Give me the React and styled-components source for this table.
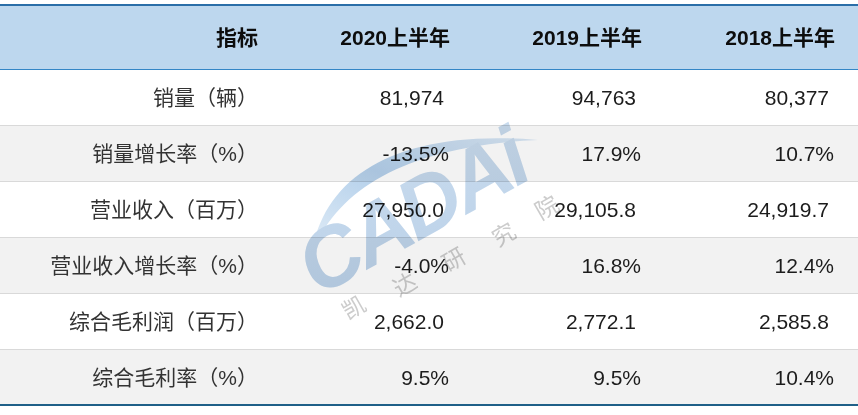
import React from "react";
import styled, { createGlobalStyle } from "styled-components";

const Global = createGlobalStyle`
  html, body { margin: 0; padding: 0; background: #ffffff; }
  body { font-family: "Liberation Sans", Arial, "Noto Sans CJK SC", sans-serif; }
`;

const Page = styled.div`
  position: relative;
  width: 858px;
  padding-top: 4px;
  background: #ffffff;
`;

const Table = styled.div`
  border-top: 2px solid #2a6ea8;
  border-bottom: 2px solid #1f6088;
`;

const Row = styled.div`
  display: grid;
  grid-template-columns: 270px 192px 192px 204px;
  height: ${(p) => p.$h}px;
  background: ${(p) => p.$bg};
  border-bottom: ${(p) => (p.$line ? `1px solid ${p.$line}` : "none")};
  align-items: center;
`;

const Cell = styled.div`
  text-align: right;
  padding-right: ${(p) => p.$pr}px;
  font-size: 21px;
  line-height: 1;
  white-space: nowrap;
  font-family: "Liberation Sans", Arial, "Noto Sans CJK SC", sans-serif;
  color: ${(p) => (p.$head ? "#0d0d0d" : p.$label ? "#333333" : "#1c1c1c")};
  font-weight: ${(p) => (p.$head ? 700 : 400)};
`;

const Watermark = styled.svg`
  position: absolute;
  left: 0;
  top: 0;
  width: 858px;
  height: 415px;
  pointer-events: none;
  mix-blend-mode: multiply;
`;

const headers = ["指标", "2020上半年", "2019上半年", "2018上半年"];
const rows = [
  ["销量（辆）", "81,974", "94,763", "80,377"],
  ["销量增长率（%）", "-13.5%", "17.9%", "10.7%"],
  ["营业收入（百万）", "27,950.0", "29,105.8", "24,919.7"],
  ["营业收入增长率（%）", "-4.0%", "16.8%", "12.4%"],
  ["综合毛利润（百万）", "2,662.0", "2,772.1", "2,585.8"],
  ["综合毛利率（%）", "9.5%", "9.5%", "10.4%"],
];

const basePad = [12, 13, 13, 24];

const cjk = [
  ["凯", 353, 306],
  ["达", 404, 283],
  ["研", 453, 258],
  ["究", 503, 233],
  ["院", 546, 206],
];

export default function App() {
  return (
    <>
      <Global />
      <Page>
        <Table>
          <Row $h={63} $bg="#bdd7ee" $line="#3486c6">
            {headers.map((h, i) => (
              <Cell key={i} $head $pr={i === 0 ? 12 : basePad[i] - 1}>
                {h}
              </Cell>
            ))}
          </Row>
          {rows.map((r, ri) => (
            <Row
              key={ri}
              $h={ri === rows.length - 1 ? 54 : 55}
              $bg={ri % 2 === 0 ? "#ffffff" : "#f2f2f2"}
              $line={ri === rows.length - 1 ? null : "#d9d9d9"}
            >
              {r.map((c, ci) => (
                <Cell
                  key={ci}
                  $label={ci === 0}
                  $pr={ci === 0 ? basePad[0] : basePad[ci] + (c.endsWith("%") ? 0 : 5)}
                >
                  {c}
                </Cell>
              ))}
            </Row>
          ))}
        </Table>
        <Watermark viewBox="0 0 858 415">
          <defs>
            <linearGradient id="arcg" x1="0" y1="1" x2="1" y2="0">
              <stop offset="0" stopColor="#e3eef8" />
              <stop offset="0.5" stopColor="#b3cfea" />
              <stop offset="1" stopColor="#d9e7f5" />
            </linearGradient>
            <linearGradient id="txtg" x1="0" y1="1" x2="1" y2="0">
              <stop offset="0" stopColor="#b9d0e8" />
              <stop offset="1" stopColor="#cadcee" />
            </linearGradient>
          </defs>
          <path
            d="M312,254 C323,175 400,128 538,140 C405,146 336,190 312,254 Z"
            fill="url(#arcg)"
          />
          <text
            x="318"
            y="297"
            transform="rotate(-29 318 297)"
            fontFamily="'Liberation Sans', Arial, sans-serif"
            fontWeight="700"
            fontStyle="italic"
            fontSize="84"
            letterSpacing="-4"
            fill="url(#txtg)"
          >
            CADAi
          </text>
          {cjk.map(([ch, x, y]) => (
            <text
              key={ch}
              x={x}
              y={y}
              transform={`rotate(-30 ${x} ${y})`}
              textAnchor="middle"
              dominantBaseline="central"
              fontFamily="'Noto Sans CJK SC', sans-serif"
              fontSize="23"
              fill="#cccccc"
            >
              {ch}
            </text>
          ))}
        </Watermark>
      </Page>
    </>
  );
}
